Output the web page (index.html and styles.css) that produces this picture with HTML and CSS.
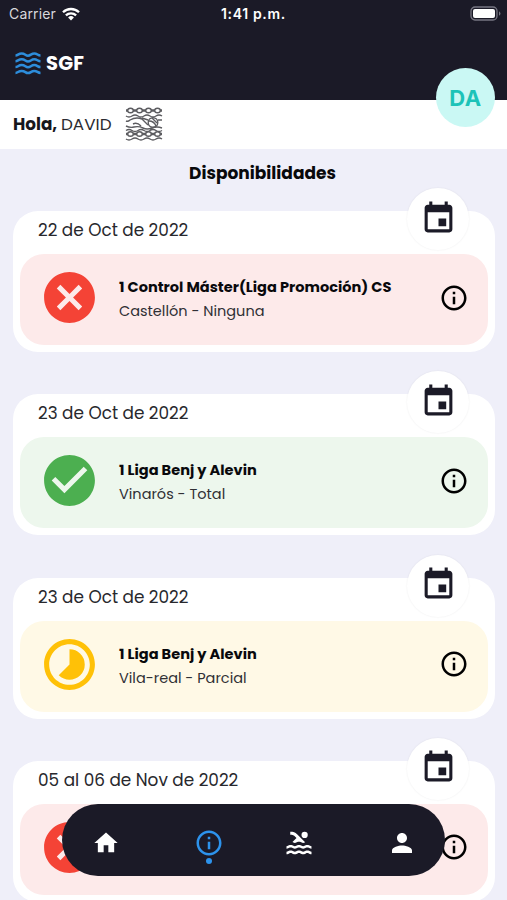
FILE: index.html
```html
<!DOCTYPE html>
<html lang="es">
<head>
<meta charset="utf-8">
<title>SGF</title>
<link rel="stylesheet" href="styles.css">
</head>
<body>
<svg class="defs" aria-hidden="true">
  <symbol id="cancel" viewBox="0 0 24 24"><path d="M12 2C6.47 2 2 6.47 2 12s4.47 10 10 10 10-4.47 10-10S17.53 2 12 2zm5 13.59L15.59 17 12 13.41 8.41 17 7 15.59 10.59 12 7 8.41 8.41 7 12 10.59 15.59 7 17 8.41 13.41 12 17 15.59z"/></symbol>
  <symbol id="check" viewBox="0 0 24 24"><path d="M12 2C6.48 2 2 6.48 2 12s4.48 10 10 10 10-4.48 10-10S17.52 2 12 2zm-2 15l-5-5 1.41-1.41L10 14.17l7.59-7.59L19 8l-9 9z"/></symbol>
  <symbol id="partial" viewBox="0 0 24 24"><path d="M16.24 7.76A5.974 5.974 0 0 0 12 6v6l-4.24 4.24c2.34 2.34 6.14 2.34 8.49 0a5.99 5.99 0 0 0-.01-8.48zM12 2C6.48 2 2 6.48 2 12s4.48 10 10 10 10-4.48 10-10S17.52 2 12 2zm0 18c-4.42 0-8-3.58-8-8s3.58-8 8-8 8 3.58 8 8-3.58 8-8 8z"/></symbol>
  <symbol id="info" viewBox="0 0 24 24"><path d="M11 7h2v2h-2zm0 4h2v6h-2zm1-9C6.48 2 2 6.48 2 12s4.48 10 10 10 10-4.48 10-10S17.52 2 12 2zm0 18c-4.41 0-8-3.59-8-8s3.59-8 8-8 8 3.59 8 8-3.59 8-8 8z"/></symbol>
  <symbol id="event" viewBox="0 0 24 24"><path d="M17 12h-5v5h5v-5zM16 1v2H8V1H6v2H5c-1.11 0-1.99.9-1.99 2L3 19c0 1.1.89 2 2 2h14c1.1 0 2-.9 2-2V5c0-1.1-.9-2-2-2h-1V1h-2zm3 18H5V8h14v11z"/></symbol>
</svg>
<div class="screen">
  <header class="top">
    <div class="status">
      <span class="carrier">Carrier</span>
      <svg class="wifi" viewBox="0 0 18 14"><g fill="none" stroke="#fff" stroke-width="2.3"><path d="M1 5.3a11.3 11.3 0 0 1 16 0"/><path d="M3.9 8.4a7.2 7.2 0 0 1 10.2 0"/></g><path fill="#fff" d="M6.1 10.4a4.1 4.1 0 0 1 5.8 0L9 13.5z"/></svg>
      <span class="clock">1:41 p.m.</span>
      <svg class="battery" viewBox="0 0 32 15"><rect x="1" y="1" width="26" height="13" rx="4" fill="none" stroke="#777682" stroke-width="1.3"/><rect x="3" y="3" width="22" height="9" rx="2" fill="#fff"/><path d="M29 5.2q3 2.3 0 4.6z" fill="#777682"/></svg>
    </div>
    <div class="brand">
      <svg class="waves" viewBox="0 0 26 23"><g fill="none" stroke="#2d8ddb" stroke-width="2.5"><path id="w" d="M.5 3.5C3 3.500 3.200 1.500 6.700 1.500S10.400 3.700 13 3.700 16.200 1.500 19.300 1.500 22.500 3.500 25.500 3.500"/><use href="#w" y="5.800"/><use href="#w" y="11.600"/><use href="#w" y="17.400"/></g></svg>
      <span class="name">SGF</span>
    </div>
    <div class="avatar">DA</div>
  </header>
  <section class="greeting">
    <b class="hola">Hola,</b><span class="user">DAVID</span>
    <svg class="emblem" viewBox="0 0 38 34" fill="none" stroke="#5c5c60" stroke-width="1.4">
      <g id="chain"><path d="M1 3.500h2M8 3.500h4M17 3.500h4M26 3.500h4M35 3.500h2" stroke-width="2.600"/><ellipse cx="5.500" cy="3.500" rx="2.800" ry="2.300"/><ellipse cx="14.500" cy="3.500" rx="2.800" ry="2.300"/><ellipse cx="23.500" cy="3.500" rx="2.800" ry="2.300"/><ellipse cx="32.500" cy="3.500" rx="2.800" ry="2.300"/></g>
      <use href="#chain" y="23.500"/>
      <path d="M1 9q3 2 6 0t6 0 6 0 6 0 6 0 6 0M1 14q2 1 4-1 6-3.500 12-1l6 6M8 17q4-2 8 2M1 19q4 2 8 1 5-1 9 1t9 0 10 0M1 23.500q3-2 6 0t6 0 6 0 6 0 6 0 6 0M1 32q3 2 6 0t6 0 6 0 6 0 6 0 6 0M17 11l6 2M33 13h4"/>
      <circle cx="28" cy="15.500" r="4.800"/><path d="M24 14q5 0 7 5M27 11l5 5"/>
    </svg>
  </section>
  <h1 class="title">Disponibilidades</h1>
  <main class="list">
    <article class="card">
      <div class="date">22 de Oct de 2022</div>
      <div class="cal"><svg><use href="#event"/></svg></div>
      <div class="panel red"><svg class="state"><use href="#cancel"/></svg><div class="text"><div class="event">1 Control Máster(Liga Promoción) CS</div><div class="place">Castellón - Ninguna</div></div><svg class="info"><use href="#info"/></svg></div>
    </article>
    <article class="card">
      <div class="date">23 de Oct de 2022</div>
      <div class="cal"><svg><use href="#event"/></svg></div>
      <div class="panel green"><svg class="state"><use href="#check"/></svg><div class="text"><div class="event">1 Liga Benj y Alevin</div><div class="place">Vinarós - Total</div></div><svg class="info"><use href="#info"/></svg></div>
    </article>
    <article class="card">
      <div class="date">23 de Oct de 2022</div>
      <div class="cal"><svg><use href="#event"/></svg></div>
      <div class="panel yellow"><svg class="state"><use href="#partial"/></svg><div class="text"><div class="event">1 Liga Benj y Alevin</div><div class="place">Vila-real - Parcial</div></div><svg class="info"><use href="#info"/></svg></div>
    </article>
    <article class="card">
      <div class="date">05 al 06 de Nov de 2022</div>
      <div class="cal"><svg><use href="#event"/></svg></div>
      <div class="panel red"><svg class="state"><use href="#cancel"/></svg><div class="text"></div><svg class="info"><use href="#info"/></svg></div>
    </article>
  </main>
  <nav class="tabs">
    <a class="tab home"><svg viewBox="0 0 24 24"><path d="M10 20v-6h4v6h5v-8h3L12 3 2 12h3v8z"/></svg></a>
    <a class="tab active"><svg><use href="#info"/></svg><i class="dot"></i></a>
    <a class="tab pool"><svg viewBox="0 0 24 24"><path d="M22 21c-1.110 0-1.730-.370-2.180-.640-.370-.220-.600-.360-1.150-.360-.560 0-.780.130-1.150.360-.460.270-1.070.640-2.180.640s-1.730-.370-2.180-.640c-.370-.220-.600-.360-1.150-.360-.560 0-.780.130-1.150.360-.460.270-1.080.640-2.190.640-1.110 0-1.730-.370-2.180-.640-.370-.230-.600-.360-1.150-.360s-.780.130-1.150.360c-.460.270-1.080.640-2.190.640v-2c.560 0 .780-.130 1.150-.360.460-.270 1.080-.640 2.190-.640s1.730.370 2.180.640c.370.230.590.360 1.150.360.560 0 .780-.130 1.150-.360.460-.270 1.080-.640 2.190-.640 1.110 0 1.730.370 2.180.640.370.220.600.360 1.150.360s.780-.130 1.150-.360c.450-.270 1.070-.640 2.180-.640s1.730.370 2.180.640c.370.230.590.360 1.150.360v2zm0-4.500c-1.110 0-1.730-.370-2.180-.640-.370-.220-.600-.360-1.150-.360-.560 0-.780.130-1.150.360-.450.270-1.070.640-2.180.640s-1.730-.370-2.180-.640c-.370-.220-.600-.360-1.150-.360-.560 0-.780.130-1.150.360-.450.270-1.070.640-2.180.640s-1.730-.370-2.180-.640c-.370-.220-.600-.360-1.150-.360s-.780.130-1.150.360c-.470.270-1.090.640-2.200.640v-2c.560 0 .780-.130 1.150-.360.450-.270 1.070-.640 2.180-.640s1.730.370 2.180.640c.370.220.600.360 1.150.360.560 0 .780-.130 1.150-.360.450-.270 1.070-.640 2.180-.640s1.730.370 2.180.640c.370.220.600.360 1.150.360s.780-.130 1.150-.360c.450-.270 1.070-.640 2.180-.640s1.730.370 2.180.640c.370.220.600.360 1.150.360v2zM8.670 12c.560 0 .780-.130 1.150-.360.460-.270 1.080-.640 2.190-.640 1.110 0 1.730.370 2.180.640.370.220.600.360 1.150.360s.780-.130 1.150-.360c.120-.070.260-.150.410-.230L10.480 5C8.930 3.450 7.500 2.990 5 3v2.500c1.820-.010 2.890.390 4 1.500l1 1-3.250 3.250c.310.120.560.270.770.390.370.230.590.360 1.150.360z"/><circle cx="16.500" cy="5.500" r="2.500"/></svg></a>
    <a class="tab"><svg viewBox="0 0 24 24"><path d="M12 12c2.210 0 4-1.790 4-4s-1.790-4-4-4-4 1.790-4 4 1.790 4 4 4zm0 2c-2.670 0-8 1.340-8 4v2h16v-2c0-2.660-5.330-4-8-4z"/></svg></a>
  </nav>
</div>
</body>
</html>
```

FILE: styles.css
```css
* { box-sizing: border-box; }
body { margin: 0; font-family: Poppins, Inter, "Open Sans", sans-serif; color: #17171c; }
svg { display: block; flex: none; }
.defs { position: absolute; width: 0; height: 0; }
.screen { position: relative; width: 507px; height: 900px; overflow: hidden; background: #efeff9; }

.top { position: relative; height: 100px; background: #1b1a27; }
.status { display: grid; grid-template-columns: 50px 162px 1fr 33px; align-items: center; height: 27px; padding: 0 4px 0 9px; color: #fff; font-family: Inter, Roboto, sans-serif; }
.carrier { font-size: 14px; color: #d8d8dc; letter-spacing: .15px; }
.wifi { width: 18px; height: 14px; margin-left: 3px; }
.clock { font-size: 14px; font-weight: 600; letter-spacing: .65px; }
.battery { width: 32px; height: 15px; }
.brand { display: flex; align-items: center; height: 72px; padding-left: 15px; gap: 5px; }
.waves { width: 26px; height: 23px; }
.name { color: #fff; font-size: 19.500px; font-weight: 700; letter-spacing: .2px; }
.avatar { position: absolute; z-index: 1; left: 436px; top: 68px; width: 59px; height: 59px; border-radius: 50%; background: #caf8f4; color: #1cc3b8; font: 700 22px/60px Inter, sans-serif; letter-spacing: .5px; text-align: center; }

.greeting { display: flex; align-items: center; height: 49px; padding: 0 0 1px 13px; background: #fff; font-size: 16.800px; }
.hola { width: 48px; font-weight: 700; }
.user { width: 65px; font-weight: 400; color: #2b2b31; }
.emblem { width: 38px; height: 34px; margin-left: -1px; }
.title { margin: 0; height: 62px; padding: 12px 0 0 18px; font-size: 17px; line-height: 24px; font-weight: 700; text-align: center; color: #09090c; }

.list { display: grid; gap: 42.300px; padding: 0 12.500px 0 13px; }
.card { position: relative; height: 141px; padding: 0 6.500px 0 7px; border-radius: 25px; background: #fff; }
.date { height: 43px; padding-left: 18px; font-size: 16.850px; line-height: 38px; color: #28282d; }
.cal { position: absolute; right: 25.500px; top: -23px; width: 62px; height: 62px; padding: 11.500px 12.500px; border-radius: 50%; background: #fff; box-shadow: 0 0 2px rgba(27, 26, 39, .08); }
.cal svg { width: 37px; height: 37px; fill: #1b1a27; }
.panel { display: flex; align-items: center; height: 91px; padding: 0 19px 4px; border-radius: 24px; }
.red { background: #fdeaea; }
.green { background: #edf7ed; }
.yellow { background: #fff9e6; }
.state { width: 61px; height: 61px; }
.red .state { fill: #f44336; }
.green .state { fill: #4caf50; }
.yellow .state { fill: #ffc107; }
.text { flex: 1; padding: 4px 0 0 19px; white-space: nowrap; }
.event { font-size: 14.550px; line-height: 24px; font-weight: 700; color: #09090c; }
.place { font-size: 14.500px; line-height: 25px; color: #303035; }
.info { width: 30px; height: 30px; }

.tabs { position: absolute; left: 62px; top: 804px; width: 383px; height: 72px; display: grid; grid-template-columns: 95px 98px 101px 1fr; align-items: center; padding: 6px 0 0 29px; border-radius: 36px; background: #1b1a27; }
.tab { position: relative; padding-left: 2px; }
.tab svg { width: 30px; height: 30px; fill: #fff; }
.tab.home { padding-left: 1px; }
.tab.home svg { width: 28px; height: 28px; }
.tab.active { padding-left: 7.500px; }
.tab.pool { padding-left: 0; }
.tab.active svg { fill: #2d93ec; }
.dot { position: absolute; left: 19.500px; top: 30px; width: 6px; height: 6px; border-radius: 50%; background: #2d93ec; }
```
